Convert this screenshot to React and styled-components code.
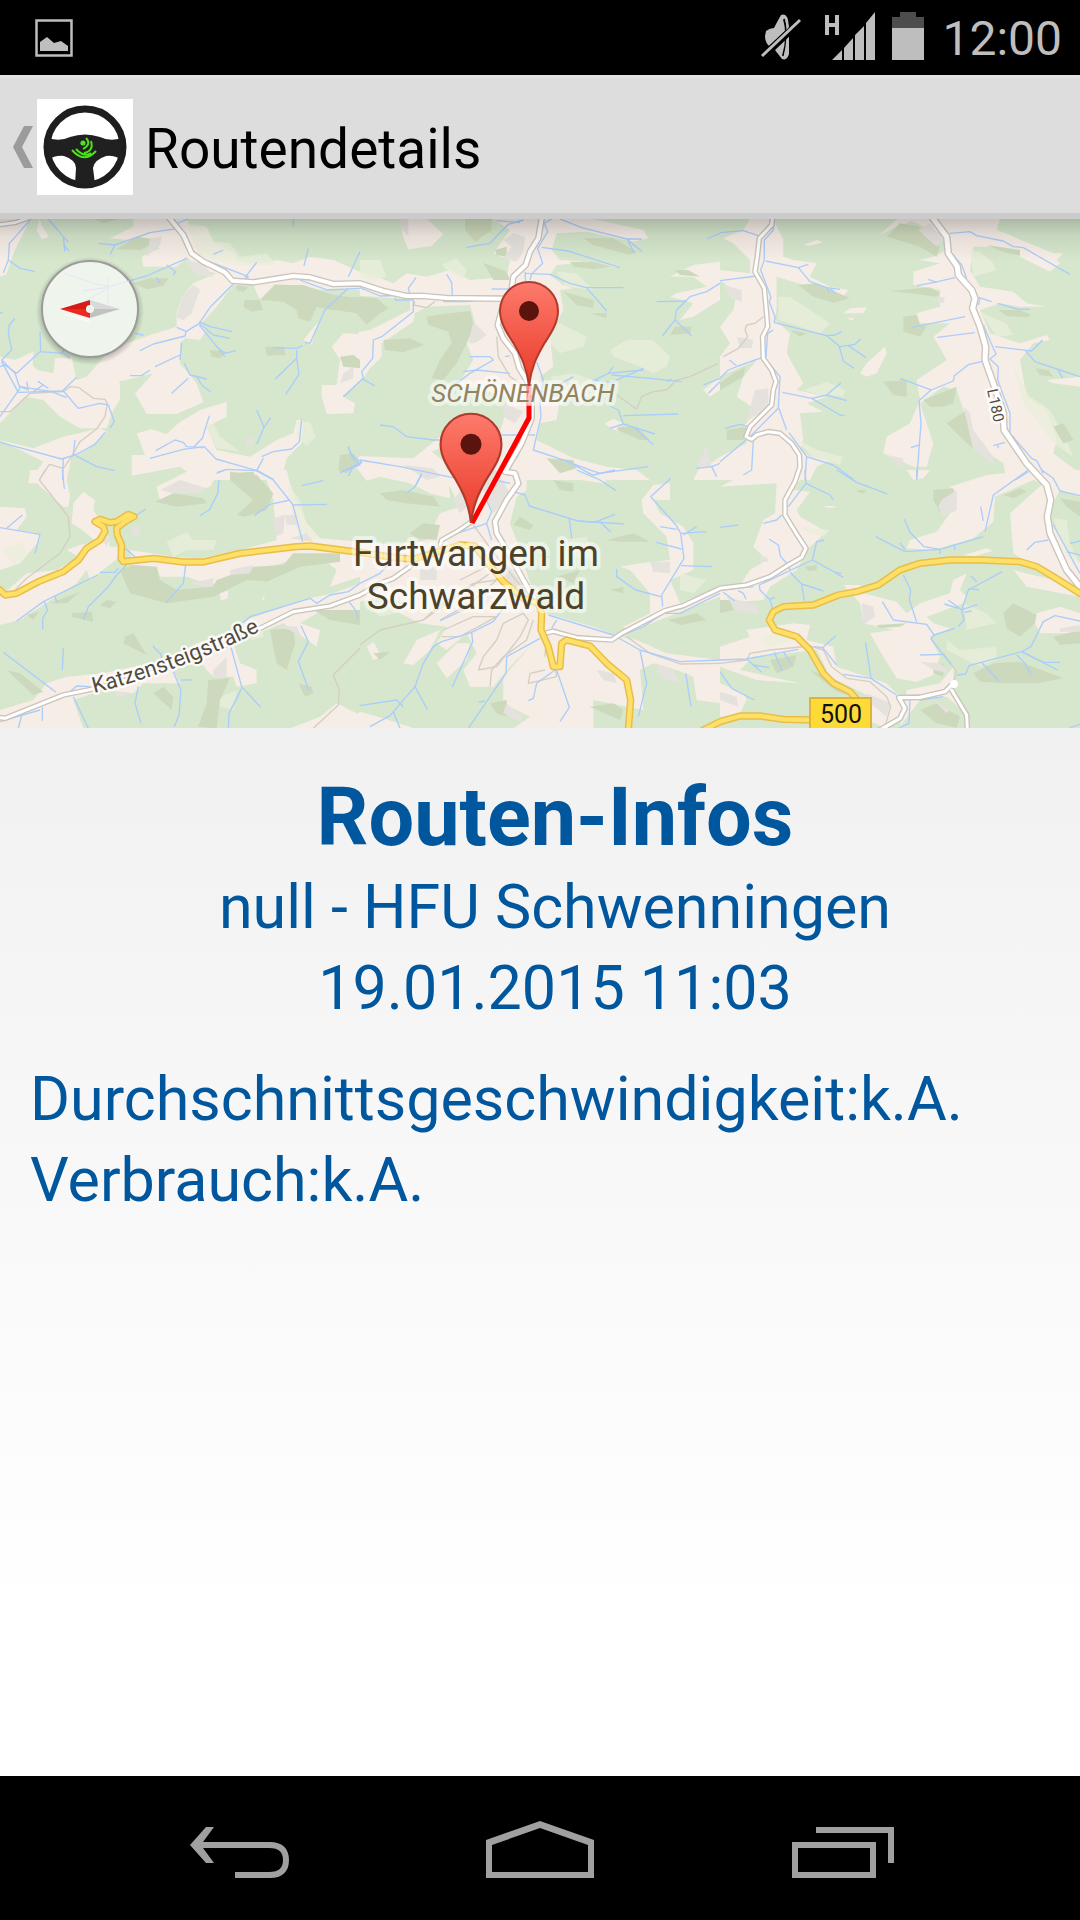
import React from "react";
import styled, { createGlobalStyle } from "styled-components";

const GlobalStyle = createGlobalStyle`
  *, *::before, *::after { box-sizing: border-box; }
  body { margin: 0; font-family: Roboto, "Noto Sans", sans-serif; }
`;

const Screen = styled.div`
  display: flex;
  flex-direction: column;
  min-height: 100vh;
  background: #000;
`;

const StatusBar = styled.div`
  display: flex;
  justify-content: space-between;
  padding: 0 18px 0 30px;
  background: #000;
  color: #bebebe;
`;

const StatusGroup = styled.div`
  display: flex;
  align-items: center;
  gap: 16px;
`;

const StatusIcon = styled.svg`
  display: block;
  width: ${(p) => p.$width}px;
  height: 75px;
`;

const Clock = styled.time`
  margin-left: 2px;
  padding-top: 2px;
  font-size: 48px;
  line-height: 72px;
`;

const ActionBar = styled.header`
  display: flex;
  align-items: center;
  height: 144px;
  padding: 3px 12px 0;
  background: #ddd;
  border-top: 3px solid #e2e2e2;
  border-bottom: 6px solid #cbcbcb;
`;

const UpButton = styled.button`
  display: flex;
  align-items: center;
  gap: 3px;
  margin: 0;
  padding: 0;
  border: 0;
  background: none;
`;

const ChevronIcon = styled.svg`
  width: 22px;
  height: 42px;
`;

const AppLogo = styled.svg`
  width: 96px;
  height: 96px;
`;

const PageTitle = styled.h1`
  margin: 0 0 0 12px;
  padding-top: 4px;
  color: #000;
  font-size: 55px;
  font-weight: 400;
  line-height: 64px;
`;

const MapPanel = styled.section`
  background: #d6e7cd;
`;

const MapDrawing = styled.svg`
  display: block;
  width: 100%;
  height: auto;
  text {
    font-family: Roboto, "Noto Sans", sans-serif;
    paint-order: stroke;
    stroke-linejoin: round;
  }
`;

const Details = styled.main`
  flex: 1;
  display: flex;
  flex-direction: column;
  gap: 30px;
  padding: 40px 0 40px 30px;
  background: linear-gradient(#f1f1f1, #fff 85%);
  color: #00579e;
`;

const Summary = styled.div`
  text-align: center;
`;

const Heading = styled.h2`
  margin: 0;
  font-size: 81px;
  font-weight: 700;
  line-height: 99px;
`;

const Line = styled.p`
  margin: 0;
  font-size: 61px;
  line-height: 81px;
`;

const NavBar = styled.nav`
  display: flex;
  justify-content: center;
  background: #000;
`;

const NavButton = styled.button`
  padding: 0;
  border: 0;
  background: none;
  color: #a0a0a0;
`;

const NavIcon = styled.svg`
  display: block;
  width: 300px;
  height: 144px;
`;

/* Map tiles: each is 1080 x 780 drawing units, in two rows of three. */
const tiles = [
  {
    x: 0,
    y: 0,
    land: [
      "0,27 90,27 75,60 45,120 30,160 18,195 0,200",
      "118,27 130,55 147,80 125,88 110,60",
      "400,27 560,27 570,50 620,50 640,95 700,130 715,155 800,160 830,150 880,160 930,140 1000,150 1080,185 1080,240 960,240 900,228 825,222 780,270 760,225 700,225 650,290 605,340 618,362 600,390 555,385 540,400 540,460 590,520 610,577 530,612 440,612 405,550 460,490 380,510 345,515 330,510 315,440 380,400 460,372 530,350 530,310 545,260 580,220 650,190 600,180 560,140 530,170 430,170 425,140 480,115 440,95 330,85 400,50",
      "0,440 45,450 100,425 98,465 112,480 160,490 165,445 215,445 230,510 260,500 330,420 390,420 330,470 360,520 360,570 340,600 320,655 240,655 180,620 130,570 75,560 0,640",
      "535,640 600,600 680,575 680,620 620,650 650,720 750,740 830,690 880,670 890,630 910,630 905,700 860,745 845,810 600,810 540,770 395,797 395,735 435,735 410,670 455,658 500,672",
      "0,690 100,715 190,680 300,655 320,665 260,720 215,740 200,810 90,810 130,755 60,720",
      "1080,372 1030,370 995,410 1020,450 1010,525 965,525 965,560 980,612 1060,610 1065,580 1030,560 1082,520",
      "910,390 955,335 935,405",
    ],
    wood: [
      "350,118 410,80 480,90 420,120", "400,220 450,205 505,205 490,228 440,238",
      "735,270 780,270 788,300 755,305 730,290", "780,270 825,225 910,225 1000,255 1080,265 1080,300 990,300 950,290 930,335 895,325 890,300 850,275",
      "795,410 850,410 858,435 800,437", "1020,440 1060,435 1080,450 1080,475 1030,470", "630,420 680,425 660,445 635,440",
      "1020,735 1060,730 1080,760 1040,790 1015,780", "690,790 760,785 770,810 690,805", "280,27 360,27 310,40", "710,225 745,232 730,246 708,240",
    ],
    grey: ["450,85 485,80 480,105 440,140", "555,150 610,160 640,200 590,195", "545,260 580,225 600,240 575,310 550,330 530,322", "1030,490 1060,470 1060,505 1020,520", "740,680 760,690 755,715 738,700"],
    pale: ["560,40 620,50 640,95 690,100 720,140 800,130 830,165 700,165 600,140", "890,635 930,635 948,680 920,708 890,680", "620,650 640,640 660,680 720,725 650,715"],
    water: [
      "90,30 55,70 28,100 25,150 10,188", "25,150 60,175 105,185", "145,27 190,80 195,125", "190,80 205,95", "190,105 207,122",
      "295,100 345,105 450,68 535,55", "345,105 330,133", "565,27 520,45", "390,212 440,198 560,145", "500,165 527,185 520,195", "470,203 480,220",
      "590,140 745,200 725,215", "770,157 735,203", "640,133 670,120", "925,115 912,168", "880,27 880,50", "1080,125 1045,200",
      "700,222 630,292 598,340 558,365 555,378 460,402 420,422", "530,352 560,365", "598,340 640,375 690,385", "598,335 630,350 697,365", "598,345 675,440", "650,410 675,430 707,422",
      "545,398 540,450", "540,435 465,470", "390,497 425,497 450,480", "553,460 570,495 620,507", "590,498 605,525 632,545", "565,505 515,550",
      "1045,235 975,300 930,400 915,397", "820,413 890,415 908,407", "890,420 890,445 825,508", "890,445 897,493 857,553", "900,210 980,240 1080,235",
      "45,325 28,345 25,370 35,420 5,450 45,490 60,535 0,620", "5,455 55,547 190,543 235,595 300,580 325,585 343,635 330,655", "0,470 15,465 50,490 120,425 190,430 210,445", "120,365 122,425", "230,502 187,543", "185,430 215,385", "80,515 85,540 60,530 155,545 200,563", "145,535 115,515 130,525 100,545",
      "0,697 185,747 225,735 285,703 315,667", "190,747 188,810", "225,690 220,733 290,770 345,782", "405,370 430,375", "0,310 8,307",
      "450,745 550,718 613,710 648,747 775,783 820,808", "467,722 525,690 550,697 560,710 610,713", "628,617 607,685 582,710", "652,787 680,778 770,782 790,745",
      "770,600 792,652 770,703", "792,652 812,623", "905,628 898,695 875,717 820,725 785,740", "1045,710 1055,740 1080,765 1020,788", "1030,560 1080,515",
    ],
    path: ["0,605 30,605 90,550 190,545 210,530 235,532 280,565 315,568 322,580 315,620 290,657 240,695 215,740 190,775 148,763 118,810"],
  },
  {
    x: 1080,
    y: 0,
    land: [
      "120,27 200,27 250,72 215,108 145,118 130,80",
      "400,27 700,27 850,60 865,85 820,95 680,65 590,70 575,120 600,150 690,155 780,170 720,175 650,160 590,165 570,195 610,225 640,235 600,240 610,300 570,380 580,470 540,500 560,560 600,560 590,630 540,640 530,690 640,745 740,770 830,780 870,810 380,810 400,730 440,600 440,560 330,530 290,530 340,450 320,400 345,340 330,285 200,290 165,310 160,335 65,400 65,440 30,475 -5,525 -5,365 30,360 150,300 150,268 0,257 -5,185 50,200 100,220 140,190 200,200 270,180 330,210 440,200 450,150 400,130 450,60",
      "1080,155 1000,165 930,200 1000,200 1040,230 950,250 930,260 1000,280 960,330 1000,320 1080,270",
      "735,640 760,627 790,640 775,665 745,650", "-20,762 0,738 160,745 240,680 240,715 215,725 260,760 270,865 210,850 150,820 60,800 20,812",
      "1035,715 1045,765 1080,740 1080,810 1000,810 1020,770",
      "1030,540 1080,500 1080,540 1050,560",
    ],
    wood: [
      "315,27 395,27 395,60 345,95 315,60", "70,390 150,385 192,405 130,427 75,420", "200,320 250,312 330,303 342,350 320,400 290,460 250,510 215,505 240,450 275,400 265,365 205,345",
      "370,158 440,185 450,210 400,210", "630,155 700,155 760,170 700,178 640,170", "670,85 760,85 830,125 810,135 700,105",
      "610,245 700,270 700,295 650,285", "690,310 740,310 740,325", "945,350 995,350 990,370 930,375", "775,650 830,650 870,690 840,690 770,660", "560,745 640,750 650,775 600,790", "945,180 985,180 1020,200 960,195",
      "405,120 440,110 440,140 410,135", "-80,270 0,260 50,265 85,295 60,310 20,345 -10,310 -75,300",
    ],
    grey: ["430,90 460,70 495,80 490,125 470,155 430,145 455,110", "340,335 380,375 345,400 325,400", "430,580 490,605 465,640 430,620", "1040,710 1055,770 1020,770 1010,765", "120,27 145,27 145,80 128,60", "130,765 220,775 240,800 200,810"],
    pale: ["570,355 600,340 680,380 670,410 600,430 570,400", "750,420 800,390 880,390 930,440 920,470 880,490 840,470 760,440", "0,150 60,150 80,200 30,215 0,200", "245,165 290,145 320,180 310,210 270,190", "590,185 650,190 700,240 620,230", "570,500 640,490 700,510 690,560 600,560"],
    water: [
      "318,112 390,100 445,43 490,30", "410,32 480,38", "575,27 553,40 563,65 533,115 548,160 515,192 510,210", "600,27 665,53 800,87 845,87", "800,87 847,125", "805,95 823,130", "545,112 625,123 780,173",
      "495,190 570,193 630,220 680,233 790,233", "680,233 740,303", "495,185 497,215", "395,237 455,237", "168,203 145,235 150,255 60,258 0,233", "260,193 275,218 277,255", "105,262 107,270 160,270 160,305 65,380 40,390 38,445 5,485 10,505 -50,560", "5,505 45,528", "250,275 320,275 360,270",
      "1080,220 1040,245 990,260 950,300 945,330 907,378", "890,275 980,273", "945,330 995,378", "1040,87 1080,70",
      "270,535 330,490 400,450 390,440 330,440", "310,485 350,480 450,490", "435,440 450,437", "530,455 550,510 540,580 543,620 520,720 625,755 700,797", "640,500 570,540", "620,755 720,790 865,770",
      "695,515 745,490 760,470", "700,510 755,517 850,475", "745,490 850,480", "755,495 870,505 965,515", "920,515 935,508",
      "745,585 775,600 790,642 885,672", "790,617 955,612", "790,642 750,655", "825,655 880,705",
      "60,645 100,650 140,680 220,690 260,690", "0,750 120,770 290,805", "-35,710 -25,735 5,757 -60,788", "5,757 -20,770 -35,798", "185,795 165,830", "405,675 525,675", "500,680 470,745", "1030,525 1080,505", "1045,550 1080,515", "1010,775 1055,770 1080,760", "1055,770 1070,800",
    ],
    path: ["165,275 160,285 200,293 225,275", "410,380 415,440 450,500 510,540", "770,555 830,597 845,560 880,545 920,540 950,510 990,500 1075,460"],
  },
  {
    x: 2160,
    y: 0,
    land: [
      "90,27 160,27 190,90 190,140 220,150 290,160 270,200 330,230 385,240 370,258 300,240 170,200 170,290 165,330 210,370 200,430 250,520 230,540 320,560 260,580 310,605 240,610 250,690 240,720 270,740 330,750 290,770 270,810 0,810 0,740 80,700 70,650 110,600 50,560 70,500 110,450 0,500 0,440 30,400 0,350 40,300 50,250 0,210 0,180 90,190 90,150 40,100 10,85 70,60",
      "530,27 590,27 520,55 480,75", "560,27 840,27 830,60 870,75 890,85 1000,130 1030,130 1010,150 1020,160 990,185 900,140 830,110 760,110 750,180 780,230 880,245 920,280 980,290 900,290 840,280 780,300 810,370 900,400 980,375 990,390 940,400 900,450 920,560 980,600 1010,690 1000,730 1080,790 1080,810 860,810 850,760 760,700 730,600 710,540 670,530 600,580 640,700 620,770 580,770 490,730 500,680 570,640 600,570 590,510 680,450 640,380 690,340 600,340 590,310 660,290 660,240 580,225 580,185 660,160 600,150 640,140 680,120 660,70",
      "250,105 290,90 310,97 270,107", "370,310 390,295 440,292 430,310", "380,323 403,325 395,332",
      "420,490 440,460 495,410 500,430 470,490 440,500", "980,510 1080,500 1080,530 1000,520",
    ],
    wood: [
      "235,225 290,220 390,265 340,278 280,260", "500,80 540,40 600,50 660,110 650,140 600,110", "550,320 590,315 600,345 620,350 600,380 550,365",
      "510,243 630,232 660,250 650,260 570,250", "490,515 560,510 560,560 520,555", "630,590 610,570 710,530 700,580 670,590", "800,105 900,120 900,138 850,125", "835,300 900,300 935,315 920,322 860,318",
      "20,660 80,650 70,690 20,690", "680,640 740,600 750,670 800,750 740,700", "40,490 75,470 70,500 0,540 0,520", "945,475 985,480 1000,500 960,495", "1000,650 1030,640 1060,690 1030,700", "210,360 260,370 240,380",
    ],
    grey: ["10,225 65,240 65,275 35,265", "105,540 145,535 145,600 80,630", "50,380 100,390 95,415 60,415", "730,590 750,610 760,660 820,740 820,765 760,720", "595,60 630,40 670,90 650,110", "650,260 675,262 670,280 650,275", "500,735 550,745 548,775"],
    pale: ["175,260 210,260 330,340 300,370 175,330", "250,540 320,515 375,540 370,560 300,555", "750,120 780,125 820,160 830,180 760,200", "780,305 860,340 880,375 830,380", "880,470 930,560 990,600 1030,670 1060,740 1000,700 910,580", "220,680 290,720 370,740 360,765 280,745"],
    water: [
      "163,27 160,60 133,90 133,150 122,180 153,262 148,275 165,320 163,338 320,377 360,410 405,403 422,387", "0,68 70,62 115,77", "137,153 235,173 270,215 320,233 360,238", "235,173 265,163", "320,233 328,245", "330,233 345,250", "0,212 110,198", "320,377 345,375 365,365", "358,410 370,453 402,475", "385,407 438,443",
      "135,445 180,500 175,590 200,660", "160,360 143,370 138,440 125,443 55,468 25,480 0,505", "28,450 50,467", "187,547 275,565 320,555 363,518", "320,555 380,572", "275,565 360,615 373,617", "175,595 90,680 0,755", "15,655 60,643 85,650", "100,690 95,780 70,795", "207,668 260,740 340,765 400,808", "260,740 255,810",
      "690,70 750,65 770,77 850,93 880,110 910,113 1050,193", "590,227 640,218 705,203", "625,208 650,217", "695,130 725,165 740,205", "775,262 815,275", "833,280 890,297 930,298", "780,265 775,285", "577,352 735,320", "652,382 765,368",
      "790,345 828,433 810,447 835,470 833,510 870,610 870,670 935,745 950,752 970,790", "825,410 935,423 968,390", "917,423 945,455 1020,480 1080,500", "1015,480 1028,505", "785,455 747,463 703,497 700,513 633,540 540,505", "633,540 597,572 603,640 590,810", "573,713 597,705", "820,707 855,697", "833,705 835,715", "885,810 925,785",
    ],
    path: ["130,320 105,340 80,345 75,360 83,380 55,415 10,440"],
  },
  {
    x: 0,
    y: 780,
    land: [
      "90,0 195,0 210,80 205,110 190,110 110,40 85,40", "250,65 285,90 280,120 320,180 330,230 350,230 360,260 270,330 260,300 230,340 60,450 0,465 0,380 80,310 170,300 235,260 200,240 240,225 290,215 240,175 215,160 220,100",
      "0,110 75,115 80,140 50,180 115,190 120,210 60,280 0,300", "480,90 470,50 560,5 660,0 630,50 600,60 530,65",
      "760,0 860,0 870,40 890,100 920,160 960,205 1080,215 1080,320 990,350 1010,300 960,260 880,270 700,320 630,345 560,320 480,320 470,290 400,300 390,240 520,260 600,265 720,240 830,210 820,90 800,30 720,15 670,20",
      "1080,340 1000,370 930,385 750,445 690,485 590,520 500,570 400,590 310,610 200,620 140,640 100,690 0,720 0,775 250,775 220,690 310,660 400,670 430,640 540,640 520,600 600,570 620,600 640,620 700,620 710,650 770,640 770,600 720,580 700,520 850,460 950,530 960,480 900,460 950,430 1080,420",
      "870,775 960,740 1010,700 1080,735 1080,775", "660,370 685,362 683,385 662,392", "785,382 795,382 790,392",
    ],
    wood: ["690,5 770,15 820,70 800,120 735,140 710,135 760,90 690,30", "465,95 520,70 610,85 620,100 530,110", "360,300 400,285 470,290 480,330 530,360 640,350 650,330 760,290 850,285 880,250 1020,250 1020,275 900,290 800,335 740,330 640,380 500,400 390,370", "375,500 400,490 440,555 370,520", "20,600 60,610 130,665 100,675", "215,430 275,425 280,455 215,440", "320,390 350,395 330,415 300,405", "150,400 240,365 200,400", "625,630 690,625 660,690 650,775 595,770 620,700", "810,480 880,475 885,520 860,600 830,580", "460,670 490,650 520,680 515,720", "895,640 935,650 940,670 915,680", "80,435 115,425 100,450", "940,420 1080,420 1080,465 990,450"],
    grey: ["480,60 540,30 620,55 600,70 520,70", "300,200 330,200 320,230", "855,135 890,135 890,165 860,165", "640,600 680,560 680,620 640,620", "570,340 640,325 640,350 580,345", "690,300 760,285 750,310 690,315", "820,145 855,135 850,190 825,200", "395,175 420,165 420,195 400,200", "870,205 920,190 940,215", "820,465 890,470 910,510 870,480", "340,670 390,665 360,685"],
    pale: ["860,40 900,90 920,160 960,205 900,215 875,120", "500,215 560,185 580,210 650,210 640,240 560,240 520,260", "740,490 790,480 790,500 755,510", "640,690 710,660 700,720 660,710", "10,240 70,215 80,260 40,285"],
    water: ["187,0 193,57", "0,173 120,193 105,250", "20,175 67,135", "437,117 410,135", "657,30 653,70 628,120 600,137", "650,10 675,0", "765,0 820,30 878,103 908,215", "763,137 810,103 870,90", "878,105 980,103", "905,47 970,32", "375,235 405,260", "380,285 350,315 325,350 265,410 250,450", "50,453 130,395 293,315", "165,378 170,398", "133,395 143,420 128,445 128,478", "557,285 550,340 498,397", "300,307 345,307 355,295", "10,547 168,667", "190,535 187,600", "458,528 483,553 485,580", "693,485 690,520 725,650 782,712", "725,655 687,730 685,775", "903,467 925,515 895,575 927,662", "520,605 543,660 537,735 523,770", "415,650 405,700 423,760", "220,680 265,775", "65,735 55,775", "127,710 127,752", "210,665 230,648 270,650", "690,490 750,440 930,385 950,400 990,375 1045,365 1080,340", "543,630 575,630", "550,553 640,510", "1047,395 1070,425 1073,450", "0,755 120,720"],
    path: ["135,0 118,30 205,140 210,200 180,250 80,325 40,365", "1080,535 1000,615 1018,660 1015,705 940,775"],
  },
  {
    x: 1080,
    y: 780,
    land: [
      "170,0 500,0 500,60 470,80 450,160 480,240 510,340 560,430 700,470 780,500 830,510 920,550 1080,570 1080,700 1010,690 1000,620 950,600 880,580 840,600 850,720 700,690 700,775 460,775 510,740 430,700 430,620 520,520 450,590 400,650 330,650 310,600 350,550 320,490 260,540 230,520 260,470 180,460 120,430 130,400 60,380 0,395 0,215 110,225 200,210 240,130 300,110 270,50 200,40",
      "880,45 930,40 930,90 880,90 900,130 970,170 1000,220 1000,300 930,330 960,400 1080,350 1080,380 900,450 800,490 790,470 870,430 870,370 810,300 780,290 840,280 930,270 920,200 850,130 845,90",
      "230,580 290,520 330,520 320,570 260,625", "130,580 170,510 240,480 210,540 160,585", "20,530 40,515 65,560 40,570", "620,0 770,0 730,40 660,30", "620,750 700,720 700,775 600,775", "-60,775 0,725 70,745 150,770 160,775",
    ],
    wood: ["60,70 130,60 220,80 240,110 140,100 80,90", "150,190 190,160 240,165 230,210 170,205", "390,700 440,690 440,740 410,730", "690,710 760,700 790,720 780,750", "460,165 480,140 520,165 510,180", "750,360 790,350 790,370", "925,450 1010,430 1040,450 960,465", "40,550 90,545 60,570", "590,320 660,300 640,340", "740,210 820,190 870,215 780,215", "580,30 640,40 640,65 600,60"],
    grey: ["280,90 350,0 410,0 450,70 400,130 370,60 300,130", "710,600 760,610 770,640 730,630", "410,290 440,280 520,390 500,400", "870,275 930,275 930,310 880,305", "890,580 940,600 960,640 900,625", "180,300 230,290 230,330 180,330", "440,700 490,740 480,755 430,730"],
    pale: ["610,210 680,200 700,270 640,260", "20,400 100,390 150,420 60,440", "640,10 700,0 720,30", "960,310 1040,330 1000,370 960,360"],
    water: ["185,10 165,50 140,70", "375,80 395,125 380,160 395,210", "460,65 495,75 508,108 655,153 793,162", "655,153 703,157 765,133", "720,155 753,187", "628,147 635,205", "650,0 720,30 768,62", "700,15 765,0", "300,187 380,160", "932,25 872,80 948,165 962,190 1040,185", "900,170 950,178", "962,190 972,265 905,375 908,410", "888,217 965,237", "963,287 1057,290", "770,297 770,320 827,360 903,380", "970,195 1010,170", "0,340 60,310 100,265", "240,453 340,405", "440,400 400,455 335,487 245,515 220,530 190,580 165,650 100,725 90,737 30,770", "335,487 338,515 277,650", "165,650 203,720", "0,707 110,690 130,710", "100,725 120,775", "540,505 440,560 438,610 325,775", "590,600 628,712 600,755", "585,600 530,640 520,685 505,692", "565,435 760,495 840,540 960,575 1080,570", "590,450 575,475", "840,540 860,640 835,740", "977,610 993,710", "355,697 375,693", "405,30 450,40", "790,495 850,470 910,430 960,430 1080,370", "540,255 570,262"],
    path: ["0,525 60,480 190,450 290,380 390,310", "355,600 370,560 410,510 430,460 490,430 505,450 480,500 410,590 355,600", "190,450 240,405 340,340 410,330 330,400 240,450", "250,480 340,440 410,440 300,500 245,500", "390,650 395,600 430,560 500,510 520,450", "555,600 510,610 505,640 590,620 585,590", "560,480 555,560", "340,165 410,260 500,370", "300,330 380,290", "800,500 870,550 960,582 1080,580"],
  },
  {
    x: 2160,
    y: 780,
    land: [
      "0,50 170,40 165,130 130,150 100,230 140,270 90,300 60,345 0,360 0,400 130,390 150,350 230,300 270,230 320,185 240,140 230,120 270,65 220,60 260,0 100,0",
      "560,0 630,0 610,25 580,30", "1080,0 960,0 800,15 690,50 710,90 690,130 650,185 570,210 560,235 640,240 760,205 820,155 825,80 940,30 970,40 870,130 880,250 1000,330 880,300 920,350 1080,380 1080,280 1040,240 990,150 1000,100 1020,60 1080,80",
      "370,345 420,345 430,370 530,395 560,430 600,400 690,370 700,330 740,310 720,360 740,380 730,400 620,440 640,460 690,475 630,500 660,560 640,615 590,635 530,625 490,560 450,490 520,480 430,460 420,400",
      "80,480 220,460 270,465 260,510 340,530 350,590 500,640 540,680 560,740 500,775 440,750 450,680 370,640 330,620 290,540 100,560 60,600 240,640 110,630 0,590 0,530 90,500",
      "0,640 70,670 80,690 60,730 0,740", "950,430 1020,410 1080,430 1080,490 960,490 940,450", "700,590 660,640 560,660 540,770 600,690 680,680 750,740 700,650", "315,108 345,108 345,113 315,113", "730,255 800,235 820,242 760,260",
    ],
    wood: ["640,60 700,55 710,90 660,125 640,90", "850,75 900,55 920,65 880,85", "850,430 880,400 950,435 945,460 900,500 860,475", "760,610 820,580 900,575 1030,625 950,640 850,640 780,635", "150,570 230,555 220,590 170,610", "255,290 290,285 290,300 265,303", "600,720 650,700 720,740 710,773 650,760", "0,390 30,390 40,420 0,430", "1000,500 1080,480 1080,520 1020,525", "640,590 670,580 670,620 640,610", "470,465 560,460 540,470 480,475", "270,600 320,620 400,680 350,665", "1020,85 1080,95 1080,140 1040,110", "415,60 440,60 430,70 410,65"],
    grey: ["665,90 710,60 710,120 670,140 655,110", "425,400 460,410 465,440 430,465", "20,380 110,405 120,430 50,425", "440,670 510,700 500,740 440,690", "600,575 660,580 690,610 640,600", "0,665 50,680 55,710 0,690", "120,260 140,260 145,275 120,275", "1020,475 1080,465 1080,485 1020,485", "630,680 690,720 680,730"],
    pale: ["680,510 720,540 830,530 830,570 780,590 680,540", "1000,145 1040,150 1050,220 1080,280 1040,260", "240,170 330,180 310,200 250,180", "730,400 800,430 830,460 740,480", "120,500 200,480 260,500 140,530"],
    water: ["0,172 55,165", "255,0 258,40 205,110", "258,40 330,75 340,90", "130,160 170,150 185,135", "147,207 175,225 182,260 205,285 210,300", "313,210 290,215 277,270 118,345 120,360 150,390 158,415", "277,270 345,307 370,322", "345,307 365,310", "210,307 245,342 310,363", "245,342 253,392", "0,360 100,350", "10,367 45,393", "55,362 70,370 78,388", "150,387 165,382", "350,0 410,37 502,72", "590,0 590,25", "925,0 820,75 795,185", "782,110 790,153", "467,200 555,245 660,238 790,200", "553,148 570,187 612,230 660,238 660,253", "540,218 555,240", "703,223 705,240", "920,240 945,217 985,210", "965,0 1000,25 1020,63 1080,77", "550,315 572,360 568,390 590,455", "487,395 520,450 620,463 642,495 705,475", "642,495 633,507 693,583", "715,470 732,450 725,420 745,360 847,305", "725,420 685,390", "725,420 773,403", "673,402 715,415", "733,427 755,423", "745,355 777,360", "752,317 770,335", "600,555 670,553", "437,517 453,625 530,675", "370,613 453,625", "0,570 80,567 235,538", "80,567 125,607", "100,585 147,593", "163,547 187,603", "190,545 215,585", "282,530 308,533 350,585", "308,533 347,497", "0,605 35,655 103,690", "712,615 737,612 747,587 905,545 933,530 970,455 1005,437 1080,453", "787,580 837,633", "905,545 970,577 1020,577", "905,545 1013,600", "890,555 915,580 933,615", "570,690 567,760 535,775", "600,690 670,680", "1050,773 1080,763", "1000,165 1080,310", "1040,245 1080,255", "1050,220 1080,213"],
    path: ["0,580 80,570 90,550 150,540 270,528 310,540 335,590 380,625 450,635 500,680 512,710 495,770", "670,550 710,605 700,640"],
  },
];

/* Roads run across the tiles, in the same units. */
const whiteRoads = [
  [12, "505,20 550,75 575,130 610,155 675,187 697,212 760,217 880,198 930,202 1000,222 1080,220 1150,243 1220,258 1270,258 1340,264 1510,266"],
  [12, "1626,20 1615,85 1590,125 1577,165 1540,200 1535,240 1505,300 1493,345 1510,385 1545,430 1558,475 1580,510 1595,560 1595,625 1565,700 1515,785 1545,790 1555,820 1520,870 1485,935 1490,970 1520,1020 1570,1110 1610,1180"],
  [8, "1415,935 1370,965 1325,990 1320,1005"],
  [9, "1230,1070 1180,1105 1140,1120 1080,1155 990,1188 880,1205 790,1250 690,1300 500,1375 290,1435 190,1455 15,1525 0,1523"],
  [9, "1635,1270 1660,1264 1730,1283 1835,1290 1870,1267 1995,1202 2050,1187 2160,1135 2240,1125 2310,1100 2365,1065 2405,1042 2418,1015 2395,980 2355,915 2355,870 2385,815 2400,770 2398,735 2375,700 2340,670 2305,665 2270,675 2255,688 2238,680 2250,650 2285,615 2315,585 2320,540 2328,515 2315,480 2290,445 2288,380 2303,350 2298,290 2293,235 2265,185 2272,140 2278,85 2315,45 2318,20"],
  [15, "2795,20 2840,80 2845,130 2872,170 2875,195 2915,240 2925,265 2918,295 2940,350 2957,410 2955,450 2980,520 3010,610 3012,660 3080,760 3140,825 3152,870 3142,920 3150,970 3200,1080 3240,1130"],
  [10, "2640,1560 2700,1525 2715,1495 2697,1463 2760,1462 2835,1445 2860,1420"],
  [9, "2855,1440 2900,1515 2902,1560"],
  [8, "0,44 45,38 90,22"],
];

const yellowRoads = [
  "0,1140 15,1155 50,1150 115,1115 190,1085 235,1050 260,1015 300,990 315,965 310,950 285,935 300,928 330,938 350,935 385,913 402,920 375,935 350,955 352,975 365,1005 363,1045 370,1055 460,1045 550,1056 610,1056 720,1030 890,1010 930,1008 1080,1027 1180,1042 1240,1048 1330,1020 1380,1005 1425,1008 1465,1060 1510,1115 1570,1165 1615,1180 1625,1210 1623,1260 1645,1310 1660,1370 1680,1370 1685,1300 1700,1290 1770,1308 1820,1360 1880,1410 1892,1470 1885,1560",
  "3240,1150 3160,1100 3110,1070 3060,1055 2940,1050 2850,1050 2760,1060 2700,1080 2635,1125 2570,1145 2515,1155 2440,1185 2350,1190 2320,1205 2308,1230 2325,1260 2390,1280 2430,1320 2470,1390 2500,1420 2550,1445 2580,1480",
  "2110,1560 2160,1535 2220,1518 2280,1518 2350,1528 2450,1530",
];

const areaLayers = [
  ["land", "#f6ede6"],
  ["pale", "#ebeedb"],
  ["wood", "#cdd9bc"],
  ["grey", "#e5e1dd"],
];

const lineLayers = [
  ["path", "#d5cec3", 4],
  ["water", "#abcdfb", 4],
];

function Tiles() {
  return (
    <>
      {areaLayers.map(([layer, fill]) => (
        <g key={layer} fill={fill} fillOpacity={layer === "pale" ? 0.7 : 1}>
          {tiles.map((tile) => (
            <g key={`${tile.x}-${tile.y}`} transform={`translate(${tile.x} ${tile.y})`}>
              {tile[layer].map((points) => <polygon key={points} points={points} />)}
            </g>
          ))}
        </g>
      ))}
      {lineLayers.map(([layer, stroke, width]) => (
        <g key={layer} fill="none" stroke={stroke} strokeWidth={width} strokeLinejoin="round">
          {tiles.map((tile) => (
            <g key={`${tile.x}-${tile.y}`} transform={`translate(${tile.x} ${tile.y})`}>
              {tile[layer].map((points) => <polyline key={points} points={points} />)}
            </g>
          ))}
        </g>
      ))}
    </>
  );
}

function Roads() {
  return (
    <g fill="none" strokeLinejoin="round" strokeLinecap="round">
      {whiteRoads.map(([width, points]) => (
        <polyline key={points} points={points} stroke="#cac4ba" strokeWidth={width + 8} />
      ))}
      {whiteRoads.map(([width, points]) => (
        <polyline key={points} points={points} stroke="#fff" strokeWidth={width} />
      ))}
      <circle cx="2862" cy="1422" r="12" fill="#fff" />
      {yellowRoads.map((points) => (
        <polyline key={points} points={points} stroke="#e8bd4b" strokeWidth="22" />
      ))}
      {yellowRoads.map((points) => (
        <polyline key={points} points={points} stroke="#ffe066" strokeWidth="13" />
      ))}
    </g>
  );
}

function Pin({ x, y, scale }) {
  return (
    <g transform={`translate(${x} ${y}) scale(${scale})`}>
      <path
        d="M0 0C-2 -18 -8 -30 -15 -42C-22 -53 -29 -63 -29 -75A29 29 0 0 1 29 -75C29 -63 22 -53 15 -42C8 -30 2 -18 0 0Z"
        fill="url(#pin)"
        stroke="#b03a2c"
        strokeWidth="2"
      />
      <circle cy="-75" r="10" fill="#5b130e" />
    </g>
  );
}

function RouteMap() {
  return (
    <MapDrawing viewBox="0 219 1080 509" role="img" aria-label="Karte der Route">
      <defs>
        <linearGradient id="pin" x1="0" y1="0" x2="0" y2="1">
          <stop offset="0" stopColor="#fd7a6c" />
          <stop offset="1" stopColor="#ea3a28" />
        </linearGradient>
        <linearGradient id="barShadow" x1="0" y1="0" x2="0" y2="1">
          <stop offset="0" stopColor="#000" stopOpacity="0.2" />
          <stop offset="0.4" stopColor="#000" stopOpacity="0.07" />
          <stop offset="1" stopColor="#000" stopOpacity="0" />
        </linearGradient>
        <radialGradient id="compassShadow">
          <stop offset="0.85" stopColor="#000" stopOpacity="0.25" />
          <stop offset="1" stopColor="#000" stopOpacity="0" />
        </radialGradient>
        <path id="katzensteig" d="M94 693Q180 672 270 626" />
      </defs>
      <rect y="219" width="1080" height="509" fill="#d6e7cd" />
      <g transform="translate(0 210) scale(0.33333)">
        <Tiles />
        <Roads />
      </g>
      <path d="M529 384V418L472 523" fill="none" stroke="#f00" strokeWidth="5" />
      <g stroke="#fff" strokeOpacity="0.5" strokeWidth="8">
        <text x="523" y="402" fontSize="26" fontStyle="italic" textAnchor="middle" fill="#93835f">SCHÖNENBACH</text>
        <g fontSize="37" fill="#4c4129" textAnchor="middle">
          <text x="476" y="566">Furtwangen im</text>
          <text x="476" y="609">Schwarzwald</text>
        </g>
        <text fontSize="22" fill="#514b3d" strokeOpacity="0.8" strokeWidth="5">
          <textPath href="#katzensteig">Katzensteigstraße</textPath>
        </text>
        <text transform="translate(987 390) rotate(78)" fontSize="15" fill="#514b3d" strokeOpacity="0.8" strokeWidth="5">L180</text>
      </g>
      <rect x="810" y="698" width="61" height="40" fill="#fddb37" stroke="#e0b23a" strokeWidth="2" />
      <text x="841" y="723" fontSize="25" textAnchor="middle" fill="#111">500</text>
      <Pin x={529} y={386} scale={1} />
      <Pin x={471} y={523} scale={1.05} />
      <circle cx="90" cy="311" r="54" fill="url(#compassShadow)" />
      <circle cx="90" cy="309" r="48" fill="#eff5ec" stroke="#9b9b9b" strokeWidth="2" />
      <path d="M64 273L95 284L108 286M82 291L104 288L129 281M108 278V304M84 302L108 288" fill="none" stroke="#dfe9f7" strokeWidth="1" />
      <path d="M60 313L90 323L88 318Z" fill="#fdf7f3" />
      <path d="M60 309L90 300V309Z" fill="#d71a18" />
      <path d="M60 309L90 318V309Z" fill="#ec2823" />
      <path d="M120 309L90 300V309Z" fill="#d9d9d9" />
      <path d="M120 309L90 318V309Z" fill="#c1c1c1" />
      <circle cx="90" cy="309" r="4" fill="#eff5ec" />
      <rect y="219" width="1080" height="42" fill="url(#barShadow)" />
    </MapDrawing>
  );
}

export default function App() {
  return (
    <Screen>
      <GlobalStyle />
      <StatusBar>
        <StatusGroup>
          <StatusIcon $width={48} viewBox="30 0 48 75" aria-hidden="true">
            <rect x="36.5" y="20.5" width="35" height="35" fill="none" stroke="#bebebe" strokeWidth="2.5" />
            <path d="M40 51V42L47 37L54 43L61 41L68 46V51Z" fill="#bebebe" />
          </StatusIcon>
        </StatusGroup>
        <StatusGroup>
          <StatusIcon $width={48} viewBox="759 0 48 75" fill="#bebebe" aria-hidden="true">
            <path d="M765 31Q769 28 773 28Q776 22 780 15Q785 13 787 20L788 27L768 46Q764 42 764 36Z" />
            <path d="M788 36V54Q786 61 781 59Q777 54 774 50Z" />
            <path d="M783 19Q788 35 782 56" fill="none" stroke="#000" strokeWidth="2" />
            <path d="M785 17Q789 36 783 59" fill="none" stroke="#bebebe" strokeWidth="2" />
            <path d="M761 57L800 21" stroke="#000" strokeWidth="7" />
            <path d="M761 56L799 20" stroke="#bebebe" strokeWidth="3" />
          </StatusIcon>
          <StatusIcon $width={52} viewBox="824 0 52 75" fill="#bebebe" aria-hidden="true">
            <path d="M825 15H829V23H835V15H839V35H835V27H829V35H825Z" />
            <path d="M832 60L842 50V60ZM844 48L853 38V60H844ZM855 35L864 26V60H855ZM866 23L875 12V60H866Z" />
          </StatusIcon>
          <StatusIcon $width={32} viewBox="892 0 32 75" aria-hidden="true">
            <path d="M900 12H916V17H924V60H892V17H900Z" fill="#4d4d4d" />
            <path d="M892 28H924V60H892Z" fill="#bebebe" />
          </StatusIcon>
          <Clock>12:00</Clock>
        </StatusGroup>
      </StatusBar>

      <ActionBar>
        <UpButton type="button" aria-label="Zurück">
          <ChevronIcon viewBox="0 0 22 42" aria-hidden="true">
            <path d="M12 0H21L10 21L21 42H12L1 21Z" fill="#9b9b9b" />
          </ChevronIcon>
          <AppLogo viewBox="37 99 96 96" aria-hidden="true">
            <rect x="37" y="99" width="96" height="96" fill="#fff" />
            <circle cx="85" cy="147" r="38" fill="none" stroke="#1e1e1e" strokeWidth="7" />
            <path d="M48 138Q60 142 70 137Q85 132 100 137Q110 142 122 138V160Q114 155 106 156Q94 160 93 168L95 184H75L76 168Q76 160 64 156Q55 155 48 160Z" fill="#202020" />
            <g fill="none" stroke="#4de01d" strokeWidth="2">
              <circle cx="83" cy="143" r="2.6" fill="#4de01d" strokeWidth="0" />
              <path d="M86 138Q92 144 83 149M91 141Q94 151 84 153M76 149Q84 158 91 153M72 150Q84 164 96 151" />
            </g>
          </AppLogo>
        </UpButton>
        <PageTitle>Routendetails</PageTitle>
      </ActionBar>

      <MapPanel>
        <RouteMap />
      </MapPanel>

      <Details>
        <Summary>
          <Heading>Routen-Infos</Heading>
          <Line>null - HFU Schwenningen</Line>
          <Line>19.01.2015 11:03</Line>
        </Summary>
        <div>
          <Line>Durchschnittsgeschwindigkeit:k.A.</Line>
          <Line>Verbrauch:k.A.</Line>
        </div>
      </Details>

      <NavBar>
        <NavButton type="button" aria-label="Zurück">
          <NavIcon viewBox="0 0 300 144" fill="currentColor" aria-hidden="true">
            <path d="M116 51H124L113 66H180C192 66 199 72 199 84C199 96 192 102 180 102H145V96H179C189 96 193 92 193 84C193 76 189 72 179 72H113L124 87H116L100 69Z" />
          </NavIcon>
        </NavButton>
        <NavButton type="button" aria-label="Startseite">
          <NavIcon viewBox="0 0 300 144" fill="currentColor" fillRule="evenodd" aria-hidden="true">
            <path d="M96 64L150 45L204 64V102H96ZM102 69V96H198V69L150 52Z" />
          </NavIcon>
        </NavButton>
        <NavButton type="button" aria-label="Letzte Apps">
          <NavIcon viewBox="0 0 300 144" fill="currentColor" fillRule="evenodd" aria-hidden="true">
            <path d="M102 66H186V102H102ZM108 72V96H180V72ZM126 51H204V87H198V57H126Z" />
          </NavIcon>
        </NavButton>
      </NavBar>
    </Screen>
  );
}
